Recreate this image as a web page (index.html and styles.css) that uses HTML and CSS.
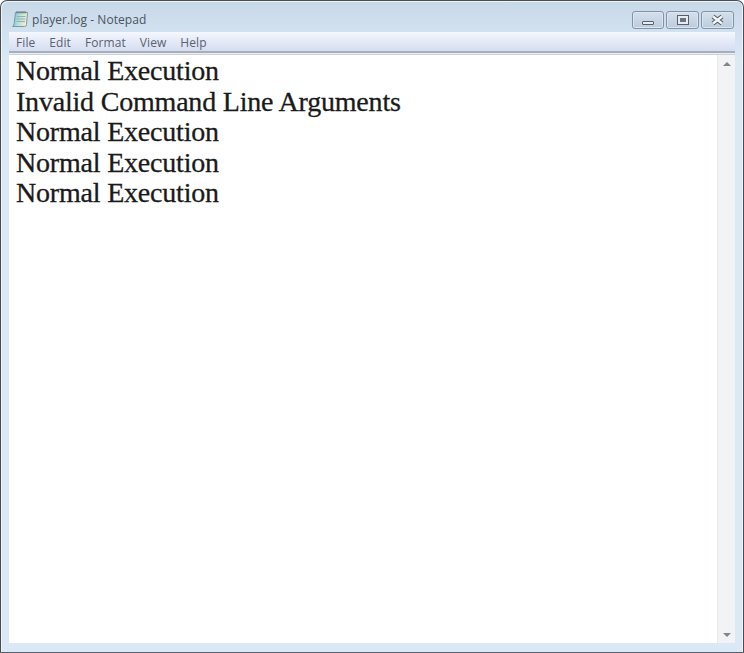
FILE: index.html
```html
<!DOCTYPE html>
<html lang="en">
<head>
<meta charset="utf-8">
<title>player.log - Notepad</title>
<link rel="stylesheet" href="styles.css">
</head>
<body>
<div class="window">
  <header class="titlebar">
    <div class="title-left">
      <svg class="app-icon" width="16" height="18" viewBox="0 0 16 18">
        <defs>
          <linearGradient id="pad" x1="0" y1="0" x2="1" y2="0.2">
            <stop offset="0" stop-color="#5fc0d0"/>
            <stop offset="0.5" stop-color="#b5e0dc"/>
            <stop offset="1" stop-color="#f3eec8"/>
          </linearGradient>
        </defs>
        <path d="M3.500 2.500H15.500L14.500 14.500Q14.300 16.500 12.500 16.500H0.500Q2 15.500 2.200 13.500Z" fill="url(#pad)" stroke="#7d98a6" stroke-width="1"/>
        <path d="M5 1V3.500M7 1V3.500M9 1V3.500M11 1V3.500M13 1V3.500" stroke="#6a747e" stroke-width="1"/>
        <path d="M5 6.500H13.500M4.800 9H13.300M4.600 11.500H13" stroke="#8fb0b4" stroke-width="1"/>
      </svg>
      <span class="title-text">player.log - Notepad</span>
    </div>
    <div class="controls">
      <div class="ctl ctl-min"><span class="min-glyph"></span></div>
      <div class="ctl ctl-max"><span class="max-glyph"></span></div>
      <div class="ctl ctl-close">
        <svg width="17" height="12" viewBox="0 0 17 12"><path d="M4 2.500L13 9.500M13 2.500L4 9.500" stroke="#4a5560" stroke-width="4.500"/><path d="M4 2.500L13 9.500M13 2.500L4 9.500" stroke="#f2f5f8" stroke-width="2.600"/></svg>
      </div>
    </div>
  </header>
  <nav class="menubar">
    <span class="menu-item">File</span>
    <span class="menu-item">Edit</span>
    <span class="menu-item">Format</span>
    <span class="menu-item">View</span>
    <span class="menu-item">Help</span>
  </nav>
  <div class="client">
    <main class="editor">
      <div class="line">Normal Execution</div>
      <div class="line">Invalid Command Line Arguments</div>
      <div class="line">Normal Execution</div>
      <div class="line">Normal Execution</div>
      <div class="line">Normal Execution</div>
    </main>
    <aside class="scrollbar">
      <span class="arrow arrow-up"></span>
      <span class="arrow arrow-down"></span>
    </aside>
  </div>
</div>
</body>
</html>
```
FILE: styles.css
```css
* { box-sizing: border-box; }
html, body { margin: 0; height: 100%; }
body { background: #fff; overflow: hidden; }

.window {
  width: 744px;
  height: 653px;
  display: flex;
  flex-direction: column;
  padding: 0 8px 9px 8px;
  border: 1px solid #4a4e52;
  border-bottom-color: #5a6068;
  border-radius: 7px 7px 0 0;
  background: linear-gradient(#c7d8e7 0, #d2e1ef 30px, #dbe9f6 60px, #dbe9f6 100%);
  box-shadow: inset 1px 1px 0 #eef4fa, inset -1px 0 0 #eef4fa;
}

.titlebar {
  height: 31px;
  flex: none;
  display: flex;
  justify-content: space-between;
  align-items: flex-start;
}
.title-left { display: flex; align-items: center; gap: 4px; padding: 9px 0 0 3px; }
.app-icon { display: block; }
.title-text {
  font: 12px/16px "Open Sans", "Liberation Sans", sans-serif;
  letter-spacing: 0.05px;
  margin-top: 2px;
  color: #4a545e;
}
.controls { display: flex; gap: 2px; padding-top: 10px; margin-right: 1px; }
.ctl {
  height: 18px;
  border: 1px solid #7f93aa;
  border-radius: 3px;
  background: linear-gradient(#d5e0ec, #bccbdc);
  box-shadow: inset 0 0 0 1px #dde6ef;
  display: flex;
  align-items: center;
  justify-content: center;
}
.ctl-min { width: 32px; align-items: flex-end; padding-bottom: 3px; }
.ctl-max { width: 33px; }
.ctl-close { width: 33px; }
.min-glyph { width: 12px; height: 4px; background: #e6ecf2; border: 1px solid #56606c; border-radius: 1px; }
.max-glyph { width: 12px; height: 10px; border: 1px solid #56606c; background: #e6ecf2; position: relative; }
.max-glyph::after { content: ""; position: absolute; left: 2px; top: 2px; width: 6px; height: 4px; background: #6a7480; }

.menubar {
  height: 22px;
  flex: none;
  display: flex;
  gap: 14px;
  padding: 2px 0 0 7px;
  align-items: flex-start;
  font: 12px/17px "Open Sans", "Liberation Sans", sans-serif;
  letter-spacing: 0.08px;
  color: #5a6270;
  background: linear-gradient(#f4f8fe 0%, #e8edf9 30%, #dbe2f3 70%, #d6ddee 86%, #a6b0bd 86%, #a6b0bd 96%, #e9edf2 96%);
}
.menu-item { display: block; }

.client {
  flex: 1;
  min-height: 0;
  display: flex;
  background: #fff;
  border-top: 1px solid #ccd3dc;
}
.editor {
  flex: 1;
  padding: 1px 0 0 7px;
  font-family: "Liberation Serif", serif;
  font-size: 28px;
  letter-spacing: -0.2px;
  line-height: 30.5px;
  color: #1a1a1a;
  -webkit-text-stroke: 0.3px #1a1a1a;
}
.line { white-space: pre; }

.scrollbar {
  width: 18px;
  flex: none;
  background: #f2f3f4;
  border-left: 1px solid #e6e8ea;
  display: flex;
  flex-direction: column;
  justify-content: space-between;
  align-items: center;
  padding: 7px 0 6px;
}
.arrow { width: 0; height: 0; border-left: 4px solid transparent; border-right: 4px solid transparent; }
.arrow-up { border-bottom: 4px solid #7e858c; }
.arrow-down { border-top: 4px solid #7e858c; }
```
